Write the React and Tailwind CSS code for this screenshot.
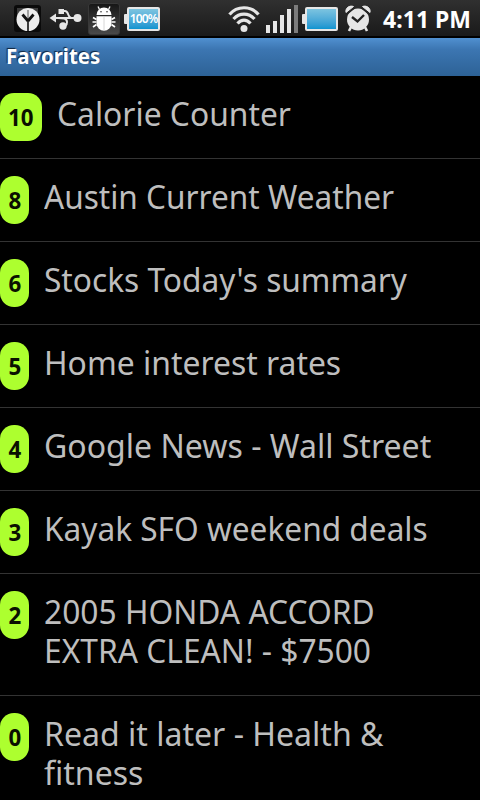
import React from 'react';

const favorites = [
  { count: 10, label: 'Calorie Counter', stretch: 'scale-x-[0.963]' },
  { count: 8, label: 'Austin Current Weather', stretch: 'scale-x-[0.957]' },
  { count: 6, label: "Stocks Today's summary", stretch: 'scale-x-[0.959]' },
  { count: 5, label: 'Home interest rates', stretch: 'scale-x-[0.966]' },
  { count: 4, label: 'Google News - Wall Street', stretch: 'scale-x-[0.971]' },
  { count: 3, label: 'Kayak SFO weekend deals', stretch: 'scale-x-[0.958]' },
  { count: 2, label: '2005 HONDA ACCORD EXTRA CLEAN! - $7500', stretch: 'scale-x-[0.962]' },
  { count: 0, label: 'Read it later - Health & fitness', stretch: 'scale-x-[0.971]' },
];

const AppIcon = () => (
  <svg width="27" height="28" viewBox="0 0 27 28" className="ml-[14px]">
    <rect width="27" height="27" rx="3" fill="#0a0a0a" />
    <path d="M3 3h8L3 11ZM17 3h7v8Z" fill="#3c3c3c" />
    <circle cx="14" cy="14.500" r="11.500" fill="#ececec" />
    <path d="M14 26V5" stroke="#555" strokeWidth="1" />
    <path d="M14 26V16" stroke="#222" strokeWidth="1.600" />
    <path d="M14 16L8.500 9.500M14 16l5.500-6.500" stroke="#111" strokeWidth="2.800" fill="none" />
  </svg>
);

const UsbIcon = () => (
  <svg width="33" height="24" viewBox="0 0 33 24" className="ml-[8px]" fill="none" stroke="#e6e6e6" strokeWidth="2">
    <path d="M5 11H28M14 4H16C20 4 18.500 11 22.500 11M9 11C14 11 18 11 18 15S16 19 13 19" />
    <path d="M0.500 11L7 6.500V15.500Z" fill="#e6e6e6" stroke="none" />
    <circle cx="28.500" cy="11" r="4" fill="#e6e6e6" stroke="none" />
    <circle cx="14" cy="19" r="3.700" fill="#e6e6e6" stroke="none" />
    <rect x="9.500" y="2" width="5.500" height="5" fill="#e6e6e6" stroke="none" />
  </svg>
);

const DebugIcon = () => (
  <svg width="32" height="32" viewBox="0 0 32 32" className="ml-[6px]">
    <defs>
      <linearGradient id="debugBg" x1="0" y1="0" x2="0" y2="1">
        <stop offset="0" stopColor="#161616" />
        <stop offset="1" stopColor="#4a4a4a" />
      </linearGradient>
    </defs>
    <rect x="0.500" y="0.500" width="31" height="31" rx="2.500" fill="url(#debugBg)" stroke="#383838" />
    <path d="M8.500 12a7.500 7.500 0 0 1 15 0Z" fill="#fff" />
    <path d="M11.500 6.500L10 3.500M20.500 6.500l1.500-3" stroke="#fff" strokeWidth="1.300" />
    <circle cx="13" cy="8.800" r="0.800" fill="#333" />
    <circle cx="19" cy="8.800" r="0.800" fill="#333" />
    <path d="M8.500 13.200h15v7a7.500 7.500 0 0 1-15 0Z" fill="#fff" />
    <path d="M16 13v14" stroke="#ccc" strokeWidth="0.800" />
    <path d="M8.500 16.500L5 14.500M8.500 19H4.500M8.500 21.500L5 24M23.500 16.500l3.500-2M23.500 19h4M23.500 21.500L27 24" stroke="#fff" strokeWidth="1.700" fill="none" />
  </svg>
);

const WifiIcon = () => (
  <svg width="32" height="28" viewBox="0 0 32 28" className="ml-auto" fill="none" stroke="#e6e6e6" strokeWidth="3.200">
    <path d="M1.500 9.500C9 0.500 23 0.500 30.500 9.500" />
    <path d="M5.500 14C11.500 7.500 20.500 7.500 26.500 14" />
    <path d="M9.500 18.500C13.500 14 18.500 14 22.500 18.500" />
    <circle cx="16" cy="23.500" r="3.500" fill="#e6e6e6" stroke="none" />
  </svg>
);

const SignalIcon = () => (
  <svg width="32" height="28" viewBox="0 0 32 28" className="ml-[6px]" fill="#e6e6e6">
    <rect x="0" y="20" width="4" height="8" />
    <rect x="7" y="16" width="4" height="12" />
    <rect x="14" y="10" width="4" height="18" />
    <rect x="21" y="4" width="4" height="24" />
    <rect x="28" y="0" width="4" height="28" fill="#7c7c7c" />
  </svg>
);

const Battery = ({ className, children }) => (
  <div className={`flex items-center ${className}`}>
    <div className="h-[10px] w-[3px] rounded-l-[1px] bg-[#e6e6e6]" />
    <div className="flex h-6 w-[33px] items-center justify-center rounded-[2px] border-2 border-[#e6e6e6] bg-linear-to-b from-[#7cc4e0] to-[#0a94d0] text-[12px] font-semibold tracking-[-0.9px] text-white">
      {children}
    </div>
  </div>
);

const AlarmIcon = () => (
  <svg width="26" height="27" viewBox="0 0 26 27" className="ml-[7px]">
    <path d="M1 7.500C0 3 4.500 0 8.500 1.500ZM25 7.500C26 3 21.500 0 17.500 1.500Z" fill="#e6e6e6" stroke="#e6e6e6" />
    <circle cx="13" cy="14.500" r="11" fill="#e6e6e6" />
    <path d="M1.500 9.500L9.500 3M24.500 9.500L16.500 3" stroke="#262626" strokeWidth="1.400" />
    <path d="M6 22l-2 4M20 22l2 4" stroke="#e6e6e6" strokeWidth="2.600" />
    <path d="M7 12l5.500 4.500L19 10" stroke="#222" strokeWidth="2.400" fill="none" />
  </svg>
);

const FavoriteRow = ({ count, label, stretch }) => (
  <li className="flex items-start border-b border-[#333333] pb-[25px] pt-[17px]">
    <span
      className={`-mb-2 flex h-12 shrink-0 justify-center rounded-[14px] bg-[#adff2f] text-2xl leading-12 font-bold text-[#0a1000] ${
        count > 9 ? 'w-[42px]' : 'w-[29px]'
      }`}
    >
      <span className="scale-x-[0.93]">{count}</span>
    </span>
    <span className={`mt-px ml-[15px] origin-left text-[33px] leading-[39px] text-[#bebebe] ${stretch}`}>{label}</span>
  </li>
);

export default function App() {
  return (
    <div className="flex h-[800px] w-[480px] flex-col overflow-hidden bg-black font-['Noto_Sans',sans-serif]">
      {/* Status bar */}
      <div className="flex h-[38px] shrink-0 items-center border-b-2 border-black bg-linear-to-b from-[#303030] to-[#1a1a1a] pt-px">
        <AppIcon />
        <UsbIcon />
        <DebugIcon />
        <Battery className="ml-1">100%</Battery>
        <WifiIcon />
        <SignalIcon />
        <Battery className="ml-1" />
        <AlarmIcon />
        <span className="mt-px mr-[9px] ml-[12px] text-[23px] font-bold text-white">4:11 PM</span>
      </div>

      {/* Title bar */}
      <header className="flex h-[38px] shrink-0 items-center bg-linear-to-b from-[#5090d0] via-[#3c76b2] via-30% to-[#2d6296] pl-[6px] text-[21px] font-bold text-white [text-shadow:-1px_-1px_1px_#10243c]">
        <span className="origin-left scale-x-[0.97]">Favorites</span>
      </header>

      <ul className="flex flex-col">
        {favorites.map((item) => (
          <FavoriteRow key={item.count} {...item} />
        ))}
      </ul>
    </div>
  );
}
